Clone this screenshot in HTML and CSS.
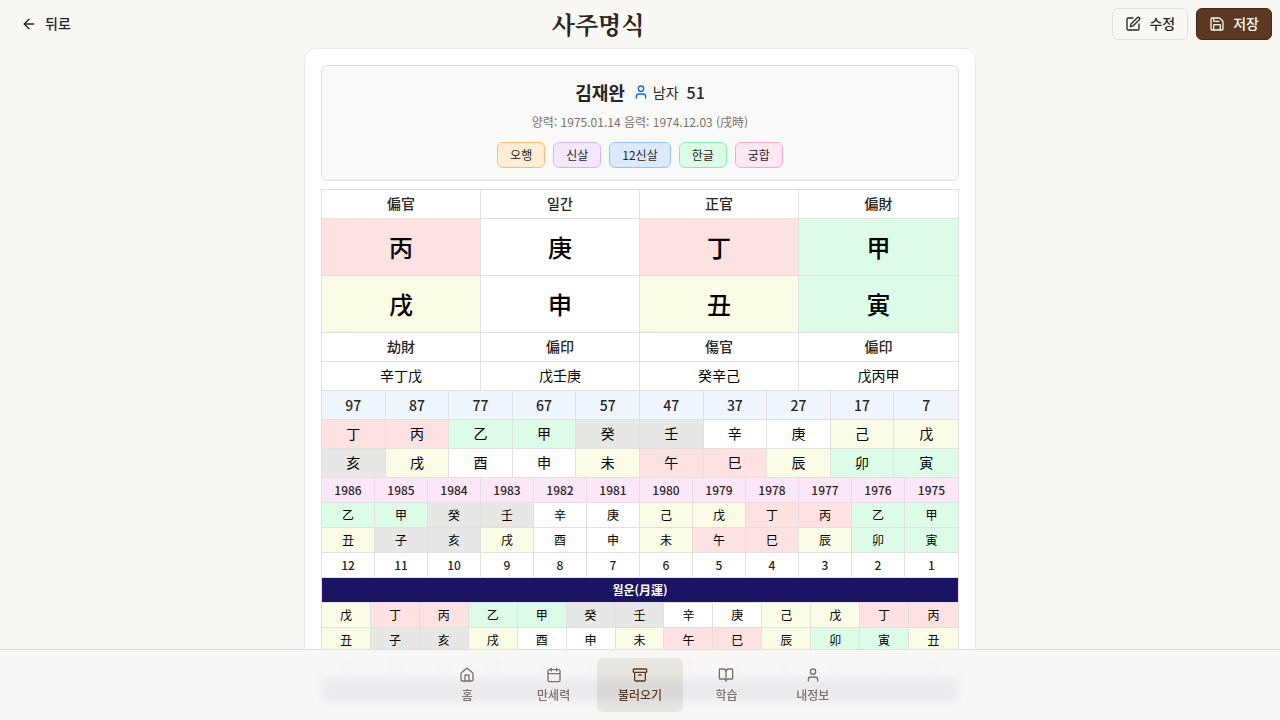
FILE: index.html
```html
<!DOCTYPE html>
<html lang="ko">
<head>
<meta charset="utf-8">
<meta name="viewport" content="width=device-width, initial-scale=1">
<title>사주명식</title>
<link rel="stylesheet" href="styles.css">
</head>
<body>
<header class="topbar">
  <button class="btn btn-ghost" type="button">
    <svg class="icon" viewBox="0 0 24 24" aria-hidden="true"><path d="m12 19-7-7 7-7"/><path d="M19 12H5"/></svg><span class="btn-text">뒤로</span>
  </button>
  <h1 class="title">사주명식</h1>
  <div class="actions">
    <button class="btn btn-outline" type="button">
      <svg class="icon" viewBox="0 0 24 24" aria-hidden="true"><path d="M12 3H5a2 2 0 0 0-2 2v14a2 2 0 0 0 2 2h14a2 2 0 0 0 2-2v-7"/><path d="M18.375 2.625a1 1 0 0 1 3 3l-9.013 9.014a2 2 0 0 1-.853.505l-2.873.84a.5.5 0 0 1-.62-.62l.84-2.873a2 2 0 0 1 .506-.852z"/></svg><span class="btn-text">수정</span>
    </button>
    <button class="btn btn-primary" type="button">
      <svg class="icon" viewBox="0 0 24 24" aria-hidden="true"><path d="M15.2 3a2 2 0 0 1 1.4.6l3.8 3.8a2 2 0 0 1 .6 1.4V19a2 2 0 0 1-2 2H5a2 2 0 0 1-2-2V5a2 2 0 0 1 2-2z"/><path d="M17 21v-7a1 1 0 0 0-1-1H8a1 1 0 0 0-1 1v7"/><path d="M7 3v4a1 1 0 0 0 1 1h7"/></svg><span class="btn-text">저장</span>
    </button>
  </div>
</header>

<main class="card">
  <section class="profile">
    <div class="person">
      <h2 class="name">김재완</h2>
      <span class="gender"><svg class="icon icon-male" viewBox="0 0 24 24" aria-hidden="true"><circle cx="12" cy="7" r="4"/><path d="M19 21v-2a4 4 0 0 0-4-4H9a4 4 0 0 0-4 4v2"/></svg>남자</span>
      <span class="age">51</span>
    </div>
    <p class="dates">양력: 1975.01.14 음력: 1974.12.03 (戌時)</p>
    <div class="chips">
      <button class="chip chip-orange" type="button">오행</button>
      <button class="chip chip-purple" type="button">신살</button>
      <button class="chip chip-blue" type="button">12신살</button>
      <button class="chip chip-green" type="button">한글</button>
      <button class="chip chip-pink" type="button">궁합</button>
    </div>
  </section>

  <div class="chart">
    <table class="grid pillars">
      <tr class="label"><td>偏官</td><td>일간</td><td>正官</td><td>偏財</td></tr>
      <tr class="big"><td class="fire">丙</td><td>庚</td><td class="fire">丁</td><td class="wood">甲</td></tr>
      <tr class="big"><td class="earth">戌</td><td>申</td><td class="earth">丑</td><td class="wood">寅</td></tr>
      <tr class="label"><td>劫財</td><td>偏印</td><td>傷官</td><td>偏印</td></tr>
      <tr><td>辛丁戊</td><td>戊壬庚</td><td>癸辛己</td><td>戊丙甲</td></tr>
    </table>
    <table class="grid decades">
      <tr class="ages"><th>97</th><th>87</th><th>77</th><th>67</th><th>57</th><th>47</th><th>37</th><th>27</th><th>17</th><th>7</th></tr>
      <tr><td class="fire">丁</td><td class="fire">丙</td><td class="wood">乙</td><td class="wood">甲</td><td class="water">癸</td><td class="water">壬</td><td>辛</td><td>庚</td><td class="earth">己</td><td class="earth">戊</td></tr>
      <tr><td class="water">亥</td><td class="earth">戌</td><td>酉</td><td>申</td><td class="earth">未</td><td class="fire">午</td><td class="fire">巳</td><td class="earth">辰</td><td class="wood">卯</td><td class="wood">寅</td></tr>
    </table>
    <table class="grid small">
      <tr class="years"><th>1986</th><th>1985</th><th>1984</th><th>1983</th><th>1982</th><th>1981</th><th>1980</th><th>1979</th><th>1978</th><th>1977</th><th>1976</th><th>1975</th></tr>
      <tr><td class="wood">乙</td><td class="wood">甲</td><td class="water">癸</td><td class="water">壬</td><td>辛</td><td>庚</td><td class="earth">己</td><td class="earth">戊</td><td class="fire">丁</td><td class="fire">丙</td><td class="wood">乙</td><td class="wood">甲</td></tr>
      <tr><td class="earth">丑</td><td class="water">子</td><td class="water">亥</td><td class="earth">戌</td><td>酉</td><td>申</td><td class="earth">未</td><td class="fire">午</td><td class="fire">巳</td><td class="earth">辰</td><td class="wood">卯</td><td class="wood">寅</td></tr>
      <tr class="label"><td>12</td><td>11</td><td>10</td><td>9</td><td>8</td><td>7</td><td>6</td><td>5</td><td>4</td><td>3</td><td>2</td><td>1</td></tr>
    </table>
    <table class="grid small">
      <tr class="banner"><th colspan="13">월운(月運)</th></tr>
      <tr><td class="earth">戊</td><td class="fire">丁</td><td class="fire">丙</td><td class="wood">乙</td><td class="wood">甲</td><td class="water">癸</td><td class="water">壬</td><td>辛</td><td>庚</td><td class="earth">己</td><td class="earth">戊</td><td class="fire">丁</td><td class="fire">丙</td></tr>
      <tr><td class="earth">丑</td><td class="water">子</td><td class="water">亥</td><td class="earth">戌</td><td>酉</td><td>申</td><td class="earth">未</td><td class="fire">午</td><td class="fire">巳</td><td class="earth">辰</td><td class="wood">卯</td><td class="wood">寅</td><td class="earth">丑</td></tr>
      <tr class="label"><td>1</td><td>12</td><td>11</td><td>10</td><td>9</td><td>8</td><td>7</td><td>6</td><td>5</td><td>4</td><td>3</td><td>2</td><td>1</td></tr>
      <tr class="banner"><th colspan="13"></th></tr>
    </table>
  </div>
</main>

<nav class="tabbar">
  <div class="tabs">
    <a class="tab" href="#home"><svg class="icon" viewBox="0 0 24 24" aria-hidden="true"><path d="M15 21v-8a1 1 0 0 0-1-1h-4a1 1 0 0 0-1 1v8"/><path d="M3 10a2 2 0 0 1 .709-1.528l7-6a2 2 0 0 1 2.582 0l7 6A2 2 0 0 1 21 10v9a2 2 0 0 1-2 2H5a2 2 0 0 1-2-2z"/></svg>홈</a>
    <a class="tab" href="#calendar"><svg class="icon" viewBox="0 0 24 24" aria-hidden="true"><path d="M8 2v4"/><path d="M16 2v4"/><rect width="18" height="18" x="3" y="4" rx="2"/><path d="M3 10h18"/></svg>만세력</a>
    <a class="tab tab-active" href="#saved" aria-current="page"><svg class="icon" viewBox="0 0 24 24" aria-hidden="true"><rect width="20" height="5" x="2" y="3" rx="1"/><path d="M4 8v11a2 2 0 0 0 2 2h12a2 2 0 0 0 2-2V8"/><path d="M10 12h4"/></svg>불러오기</a>
    <a class="tab" href="#study"><svg class="icon" viewBox="0 0 24 24" aria-hidden="true"><path d="M12 7v14"/><path d="M3 18a1 1 0 0 1-1-1V4a1 1 0 0 1 1-1h5a4 4 0 0 1 4 4 4 4 0 0 1 4-4h5a1 1 0 0 1 1 1v13a1 1 0 0 1-1 1h-6a3 3 0 0 0-3 3 3 3 0 0 0-3-3z"/></svg>학습</a>
    <a class="tab" href="#me"><svg class="icon" viewBox="0 0 24 24" aria-hidden="true"><circle cx="12" cy="7" r="4"/><path d="M19 21v-2a4 4 0 0 0-4-4H9a4 4 0 0 0-4 4v2"/></svg>내정보</a>
  </div>
</nav>
</body>
</html>
```

FILE: styles.css
```css
:root {
  --page: #f9f8f4;
  --ink: #292524;
  --muted: #7d7169;
  --line: #e2e0dd;
  --brown: #5c3a21;
}

* { box-sizing: border-box; }

html { scrollbar-width: none; }

body {
  margin: 0;
  padding-bottom: 88px;
  background: var(--page);
  color: var(--ink);
  font-family: "Noto Sans CJK KR", sans-serif;
  font-size: 14px;
  line-height: 20px;
}

h1, h2, p { margin: 0; }

.icon {
  width: 16px;
  height: 16px;
  flex: none;
  fill: none;
  stroke: currentColor;
  stroke-width: 2;
  stroke-linecap: round;
  stroke-linejoin: round;
}

.topbar {
  display: flex;
  align-items: center;
  justify-content: space-between;
  height: 48px;
  padding: 0 8px;
}

.title {
  font-family: "Noto Serif CJK KR", "Noto Serif KR", serif;
  font-size: 24px;
  line-height: 32px;
  font-weight: 700;
}

.actions { display: flex; gap: 8px; }

.btn {
  display: inline-flex;
  align-items: center;
  gap: 8px;
  height: 32px;
  padding: 0 12px;
  border: 1px solid transparent;
  border-radius: 6px;
  background: transparent;
  color: var(--ink);
  font: inherit;
  font-weight: 500;
}

.btn-text { padding-bottom: 2px; }

.btn-outline { border-color: var(--line); }

.btn-primary {
  border-color: #44291a;
  background: var(--brown);
  color: var(--page);
}

.card {
  max-width: 672px;
  margin: 0 auto;
  padding: 16px;
  border: 1px solid #ebe9e5;
  border-radius: 12px;
  background: #fff;
}

.profile {
  display: flex;
  flex-direction: column;
  align-items: center;
  margin-bottom: 8px;
  padding: 12px;
  border: 1px solid var(--line);
  border-radius: 6px;
  background: #f9f9f8;
}

.person {
  display: flex;
  align-items: center;
  gap: 8px;
  height: 28px;
  margin-bottom: 8px;
}

.name {
  font-size: 18px;
  line-height: 28px;
  font-weight: 700;
}

.gender {
  display: inline-flex;
  align-items: center;
  gap: 4px;
}

.icon-male { color: #2563eb; }

.age { font-size: 16px; line-height: 24px; font-weight: 500; }

.dates {
  margin-bottom: 12px;
  color: var(--muted);
  font-size: 12px;
  line-height: 16px;
}

.chips { display: flex; gap: 8px; }

.chip {
  height: 26px;
  padding: 0 12px;
  border: 1px solid;
  border-radius: 6px;
  color: var(--ink);
  font: inherit;
  font-size: 12px;
  line-height: 16px;
}

.chip-orange { background: #ffedd5; border-color: #fdba74; }
.chip-purple { background: #f3e8ff; border-color: #d8b4fe; }
.chip-blue { background: #dbeafe; border-color: #93c5fd; }
.chip-green { background: #dcfce7; border-color: #86efac; }
.chip-pink { background: #fce7f3; border-color: #f9a8d4; }

.chart {
  border: 1px solid var(--line);
  border-bottom: 0;
}

.grid {
  width: 100%;
  table-layout: fixed;
  border-collapse: separate;
  border-spacing: 0;
  color: #000;
  text-align: center;
}

.grid td,
.grid th {
  height: 29px;
  padding: 0 0 2px;
  border-right: 1px solid var(--line);
  border-bottom: 1px solid var(--line);
  font-weight: 400;
}

.grid td:last-child,
.grid th:last-child { border-right: 0; }

.grid .label td,
.grid .ages th,
.grid .years th {
  color: var(--ink);
  font-weight: 500;
}

.grid .ages th {
  padding: 0;
  background: #eff6ff;
}

.grid .years th { background: #fce7f9; }

.grid .big td {
  height: 57px;
  padding: 0;
  font-size: 24px;
  line-height: 32px;
  font-weight: 500;
}

.small { font-size: 12px; line-height: 16px; }

.grid.small td,
.grid.small th { height: 25px; padding: 0; }

.grid .banner th {
  background: #1b1464;
  color: #fff;
  font-weight: 700;
}

.fire { background: #fee2e2; }
.wood { background: #dcfce7; }
.earth { background: #fafce5; }
.water { background: #e7e7e5; }

.tabbar {
  position: fixed;
  right: 0;
  bottom: 0;
  left: 0;
  padding: 8px;
  border-top: 1px solid var(--line);
  background: rgba(249, 248, 246, 0.94);
  backdrop-filter: blur(4px);
}

.tabs {
  display: flex;
  max-width: 432px;
  margin: 0 auto;
}

.tab {
  display: flex;
  flex: 1;
  flex-direction: column;
  align-items: center;
  gap: 4px;
  padding: 8px 0;
  border: 1px solid transparent;
  border-radius: 6px;
  color: var(--muted);
  font-size: 12px;
  line-height: 16px;
  font-weight: 500;
  text-decoration: none;
}

.tab-active {
  background: rgba(92, 78, 50, 0.11);
  color: var(--brown);
}
```
